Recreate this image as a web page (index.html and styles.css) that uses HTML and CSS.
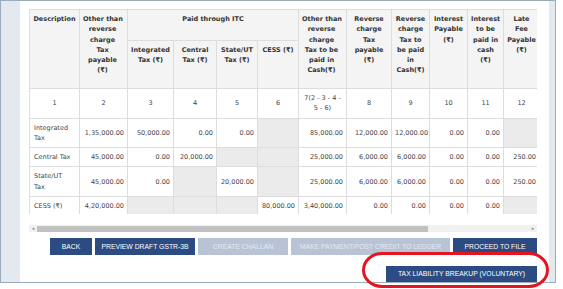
FILE: index.html
```html
<!DOCTYPE html>
<html lang="en">
<head>
<meta charset="utf-8">
<title>GSTR-3B Payment of Tax</title>
<link rel="stylesheet" href="styles.css">
</head>
<body>
<div class="page">
  <div class="frame">
    <div class="rail"></div>
    <div class="panel">
      <div class="table-wrap">
        <table class="tax-table">
          <colgroup>
            <col style="width:50px"><col style="width:48px"><col style="width:46px"><col style="width:43px">
            <col style="width:41px"><col style="width:41px"><col style="width:48px"><col style="width:45px">
            <col style="width:38px"><col style="width:38px"><col style="width:36px"><col style="width:36px">
          </colgroup>
          <thead>
            <tr class="head-1">
              <th rowspan="2">Description</th>
              <th rowspan="2" class="tight">Other&nbsp;than reverse charge Tax payable (₹)</th>
              <th colspan="4">Paid through ITC</th>
              <th rowspan="2" class="tight">Other&nbsp;than reverse charge Tax to be paid in Cash(₹)</th>
              <th rowspan="2">Reverse charge Tax payable (₹)</th>
              <th rowspan="2">Reverse charge Tax to be paid in Cash(₹)</th>
              <th rowspan="2">Interest Payable (₹)</th>
              <th rowspan="2">Interest to be paid in cash (₹)</th>
              <th rowspan="2">Late Fee Payable (₹)</th>
            </tr>
            <tr class="head-2">
              <th>Integrated Tax (₹)</th>
              <th>Central Tax (₹)</th>
              <th>State/UT Tax (₹)</th>
              <th>CESS (₹)</th>
            </tr>
          </thead>
          <tbody>
            <tr class="num-row">
              <td>1</td><td>2</td><td>3</td><td>4</td><td>5</td><td>6</td>
              <td>7(2 - 3 - 4 - 5 - 6)</td><td>8</td><td>9</td><td>10</td><td>11</td><td>12</td>
            </tr>
            <tr class="tall">
              <td class="desc">Integrated Tax</td>
              <td>1,35,000.00</td><td>50,000.00</td><td>0.00</td><td>0.00</td><td class="off"></td>
              <td>85,000.00</td><td>12,000.00</td><td>12,000.00</td><td>0.00</td><td>0.00</td><td class="off"></td>
            </tr>
            <tr>
              <td class="desc">Central Tax</td>
              <td>45,000.00</td><td>0.00</td><td>20,000.00</td><td class="off"></td><td class="off"></td>
              <td>25,000.00</td><td>6,000.00</td><td>6,000.00</td><td>0.00</td><td>0.00</td><td>250.00</td>
            </tr>
            <tr class="tall">
              <td class="desc">State/UT Tax</td>
              <td>45,000.00</td><td>0.00</td><td class="off"></td><td>20,000.00</td><td class="off"></td>
              <td>25,000.00</td><td>6,000.00</td><td>6,000.00</td><td>0.00</td><td>0.00</td><td>250.00</td>
            </tr>
            <tr>
              <td class="desc">CESS (₹)</td>
              <td>4,20,000.00</td><td class="off"></td><td class="off"></td><td class="off"></td><td>80,000.00</td>
              <td>3,40,000.00</td><td>0.00</td><td>0.00</td><td>0.00</td><td>0.00</td><td class="off"></td>
            </tr>
          </tbody>
        </table>
      </div>
      <div class="hscroll">
        <span class="arrow">◂</span>
        <div class="track"><div class="thumb"></div></div>
        <span class="arrow">▸</span>
      </div>
      <div class="actions">
        <button class="btn btn-back">BACK</button>
        <button class="btn btn-preview">PREVIEW DRAFT GSTR-3B</button>
        <button class="btn btn-challan disabled">CREATE CHALLAN</button>
        <button class="btn btn-payment disabled">MAKE PAYMENT/POST CREDIT TO LEDGER</button>
        <button class="btn btn-proceed">PROCEED TO FILE</button>
      </div>
      <div class="actions second">
        <button class="btn btn-breakup">TAX LIABILITY BREAKUP (VOLUNTARY)</button>
      </div>
    </div>
    <div class="rail rail-right"></div>
  </div>
  <div class="highlight"></div>
</div>
</body>
</html>
```
FILE: styles.css
```css
* { box-sizing: border-box; }

html, body {
  margin: 0;
  padding: 0;
  background: #ffffff;
}

.page {
  position: relative;
  width: 563px;
  height: 289px;
  overflow: hidden;
}

.frame {
  display: flex;
  width: 556px;
  height: 283px;
  border: 1px solid #9aabbb;
}

.rail {
  width: 19px;
  background: #e4e9ef;
}

.rail-right {
  width: 6px;
}

.panel {
  flex: 1;
  background: #ffffff;
  padding: 8px 12px 0 9px;
  display: flex;
  flex-direction: column;
}

.table-wrap {
  width: 508px;
  overflow: hidden;
}

.tax-table {
  border-collapse: collapse;
  table-layout: fixed;
  width: 510px;
  font-family: "DejaVu Sans", Verdana, sans-serif;
  font-size: 6.5px;
  line-height: 10.3px;
  color: #444444;
}

.tax-table th,
.tax-table td {
  border: 1px solid #dddddd;
  padding: 4px 3px;
}

.tax-table th {
  background: #f4f4f4;
  color: #333333;
  font-weight: bold;
  text-align: center;
  vertical-align: top;
}

.tax-table th.tight {
  padding-left: 3px;
  padding-right: 5px;
}

.head-1 { height: 31px; }
.head-2 { height: 48px; }

.tax-table td {
  text-align: right;
  vertical-align: middle;
  height: 18px;
  white-space: nowrap;
}

.tax-table tr.tall td { height: 29px; }

.tax-table td.desc {
  text-align: left;
  white-space: normal;
  padding-left: 4px;
  padding-right: 6px;
}

.num-row td {
  text-align: center;
  white-space: normal;
  height: 29px;
}

.tax-table td.off {
  background: #ebebeb;
}

.hscroll {
  display: flex;
  align-items: center;
  width: 508px;
  height: 7px;
  margin-top: 11px;
  background: #f1f1f1;
}

.arrow {
  width: 8px;
  font-size: 5px;
  line-height: 7px;
  color: #888888;
  text-align: center;
  font-family: "DejaVu Sans", sans-serif;
}

.track {
  flex: 1;
  height: 6px;
}

.thumb {
  width: 391px;
  height: 6px;
  background: #c1c1c1;
}

.actions {
  display: flex;
  justify-content: flex-end;
  gap: 3px;
  width: 508px;
  margin-top: 6px;
}

.actions.second {
  margin-top: 11px;
}

.btn {
  height: 17px;
  padding: 0;
  border: 0;
  margin: 0;
  background: #2c4b82;
  color: #ffffff;
  font-family: "Liberation Sans", Arial, sans-serif;
  font-size: 6.8px;
  line-height: 17px;
  text-align: center;
  white-space: nowrap;
}

.btn-back { width: 42px; }
.btn-preview { width: 100px; }
.btn-challan { width: 90px; }
.btn-payment { width: 159px; }
.btn-proceed { width: 84px; }

.btn.disabled {
  background: #b8c4d6;
  color: #e4e9f1;
}

.btn-breakup {
  width: 151px;
  height: 16px;
  line-height: 16px;
}

.highlight {
  position: absolute;
  left: 362px;
  top: 252px;
  width: 187px;
  height: 36px;
  border: 3px solid #e3151f;
  border-radius: 20px / 18px;
}
```
